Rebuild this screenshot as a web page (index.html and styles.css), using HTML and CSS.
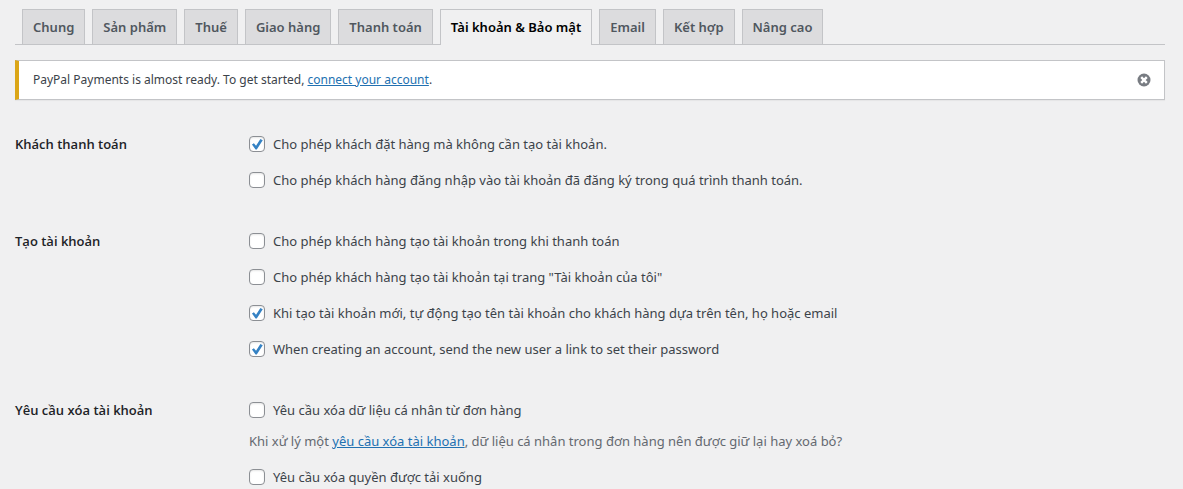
FILE: index.html
```html
<!DOCTYPE html>
<html lang="vi">
<head>
    <meta charset="UTF-8">
    <meta name="viewport" content="width=device-width, initial-scale=1.0">
    <title>Tài khoản &amp; Bảo mật</title>
    <link rel="stylesheet" href="styles.css">
</head>
<body>
    <nav class="nav-tabs">
        <a class="nav-tab" href="#general">Chung</a>
        <a class="nav-tab" href="#products">Sản phẩm</a>
        <a class="nav-tab" href="#tax">Thuế</a>
        <a class="nav-tab" href="#shipping">Giao hàng</a>
        <a class="nav-tab" href="#checkout">Thanh toán</a>
        <a class="nav-tab nav-tab-active" href="#account" aria-current="page">Tài khoản &amp; Bảo mật</a>
        <a class="nav-tab" href="#email">Email</a>
        <a class="nav-tab" href="#integration">Kết hợp</a>
        <a class="nav-tab" href="#advanced">Nâng cao</a>
    </nav>

    <div class="notice">
        <p>PayPal Payments is almost ready. To get started, <a href="#connect">connect your account</a>.</p>
        <button class="notice-dismiss" type="button" aria-label="Dismiss">
            <svg viewBox="0 0 14 14" width="14" height="14" aria-hidden="true">
                <circle cx="7" cy="7" r="6.5" fill="#787c82"/>
                <path d="M4.2 4.2l5.6 5.6M9.8 4.2l-5.6 5.6" stroke="#fff" stroke-width="2.4"/>
            </svg>
        </button>
    </div>

    <form class="settings">
        <section class="setting" role="group" aria-labelledby="guest-title">
            <h2 id="guest-title">Khách thanh toán</h2>
            <div class="options">
                <label class="option"><input type="checkbox" checked>Cho phép khách đặt hàng mà không cần tạo tài khoản.</label>
                <label class="option"><input type="checkbox">Cho phép khách hàng đăng nhập vào tài khoản đã đăng ký trong quá trình thanh toán.</label>
            </div>
        </section>

        <section class="setting" role="group" aria-labelledby="create-title">
            <h2 id="create-title">Tạo tài khoản</h2>
            <div class="options">
                <label class="option"><input type="checkbox">Cho phép khách hàng tạo tài khoản trong khi thanh toán</label>
                <label class="option"><input type="checkbox">Cho phép khách hàng tạo tài khoản tại trang "Tài khoản của tôi"</label>
                <label class="option"><input type="checkbox" checked>Khi tạo tài khoản mới, tự động tạo tên tài khoản cho khách hàng dựa trên tên, họ hoặc email</label>
                <label class="option"><input type="checkbox" checked>When creating an account, send the new user a link to set their password</label>
            </div>
        </section>

        <section class="setting" role="group" aria-labelledby="erase-title">
            <h2 id="erase-title">Yêu cầu xóa tài khoản</h2>
            <div class="options">
                <label class="option"><input type="checkbox">Yêu cầu xóa dữ liệu cá nhân từ đơn hàng</label>
                <p class="description">Khi xử lý một <a href="#erase">yêu cầu xóa tài khoản</a>, dữ liệu cá nhân trong đơn hàng nên được giữ lại hay xoá bỏ?</p>
                <label class="option"><input type="checkbox">Yêu cầu xóa quyền được tải xuống</label>
            </div>
        </section>
    </form>
</body>
</html>
```
FILE: styles.css
```css
* {
    box-sizing: border-box;
    margin: 0;
    padding: 0;
}

body {
    padding: 9px 18px 0 15px;
    background: #f0f0f1;
    color: #3c434a;
    font-family: "Noto Sans", sans-serif;
    font-size: 13px;
    line-height: 20px;
}
a {
    color: #2271b1;
}

/* Tabs */
.nav-tabs {
    display: flex;
    gap: 7px;
    padding-left: 7px;
    border-bottom: 1px solid #c3c4c7;
}
.nav-tab {
    padding: 7px 10px;
    border: 1px solid #c3c4c7;
    border-bottom: 0;
    background: #dcdcde;
    color: #50575e;
    font-weight: 600;
    text-decoration: none;
    white-space: nowrap;
}
.nav-tab-active {
    margin-bottom: -1px;
    background: #f0f0f1;
    color: #000;
}

/* Notice */
.notice {
    display: flex;
    align-items: center;
    justify-content: space-between;
    margin-top: 15px;
    padding: 9px 13px 9px 14px;
    border: 1px solid #c3c4c7;
    border-left: 4px solid #dba617;
    background: #fff;
    box-shadow: 0 1px 1px rgba(0, 0, 0, 0.04);
    font-size: 12px;
}
.notice-dismiss {
    display: flex;
    border: 0;
    background: none;
    cursor: pointer;
}

/* Settings */
.settings {
    display: flex;
    flex-direction: column;
    gap: 41px;
    margin-top: 34px;
}
.setting {
    display: grid;
    grid-template-columns: 234px 1fr;
}
.setting h2 {
    color: #1d2327;
    font-family: "Open Sans", sans-serif;
    font-size: 13px;
    font-weight: 600;
}
.options {
    display: flex;
    flex-direction: column;
    align-items: flex-start;
    gap: 16px;
}
.option {
    display: flex;
    align-items: center;
    gap: 8px;
}
.option input {
    appearance: none;
    flex: none;
    display: grid;
    place-items: center;
    width: 16px;
    height: 16px;
    border: 1px solid #8c8f94;
    border-radius: 4px;
    background: #fff;
    box-shadow: inset 0 1px 2px rgba(0, 0, 0, 0.1);
}
.option input:checked::before {
    content: "";
    width: 12px;
    height: 12px;
    background: #3582c4;
    clip-path: polygon(8% 54%, 24% 44%, 42% 64%, 78% 8%, 98% 18%, 48% 96%, 38% 96%);
}
.description {
    margin-top: -5px;
    color: #646970;
}
```
